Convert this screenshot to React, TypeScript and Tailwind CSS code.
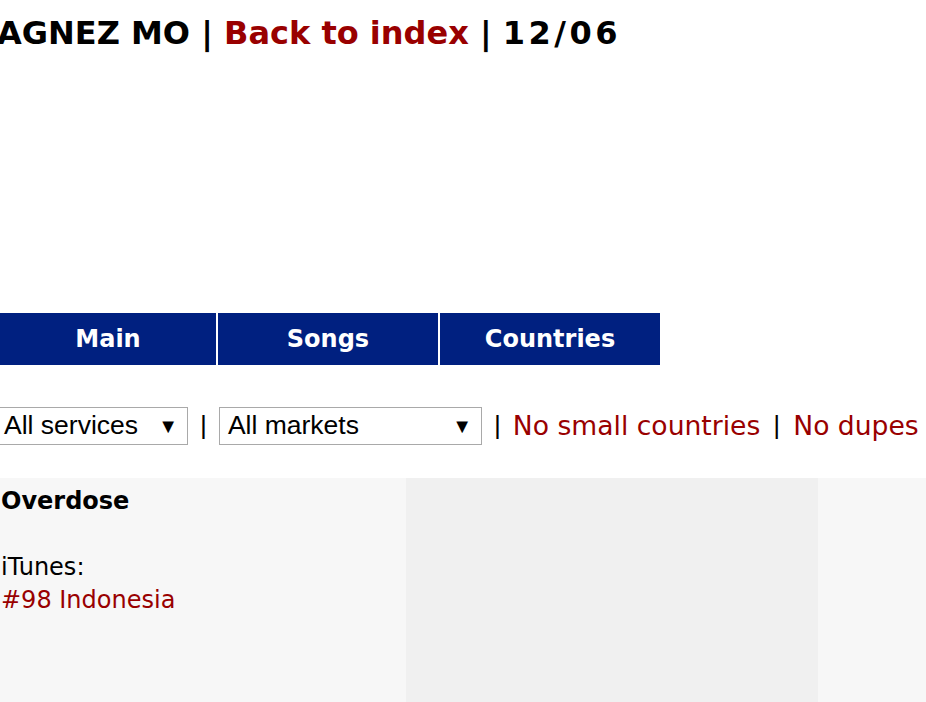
const verdana = "font-['Verdana','DejaVu_Sans',sans-serif]";

function Select({ label, width }: { label: string; width: string }) {
  return (
    <div
      className={`${width} h-[38px] flex items-center justify-between border border-[#a9a9a9] bg-white pl-[8px] pr-[9px] font-['Liberation_Sans',Arial,sans-serif] text-[26.5px] text-black`}
    >
      <span>{label}</span>
      <span className="text-[20px]">▼</span>
    </div>
  );
}

export default function App() {
  return (
    <div className={`${verdana} bg-white w-[926px] h-[702px] overflow-hidden`}>
      <h1 className="-ml-[3px] pt-[14px] text-[32px] font-bold leading-[38px] text-black whitespace-nowrap">
        AGNEZ MO | <span className="text-[#990000]">Back to index</span> |{" "}
        <span className="tracking-[3.5px]">12/06</span>
      </h1>

      <nav className="mt-[261px] flex gap-[2px]">
        {["Main", "Songs", "Countries"].map((t, i) => (
          <div
            key={t}
            className={`${i === 0 ? "w-[216px]" : "w-[220px]"} h-[52px] flex items-center justify-center bg-[#002080] text-white font-bold text-[24px]`}
          >
            {t}
          </div>
        ))}
      </nav>

      <div className="mt-[41px] flex items-center -ml-[5px] whitespace-nowrap text-[26.6px]">
        <Select label="All services" width="w-[193px]" />
        <span className="mx-[12px] font-['Liberation_Sans',Arial,sans-serif]">|</span>
        <Select label="All markets" width="w-[263px]" />
        <span className="ml-[12px] mr-[12px] font-['Liberation_Sans',Arial,sans-serif]">|</span>
        <span className="text-[#990000]">No small countries</span>
        <span className="mx-[13px] font-['Liberation_Sans',Arial,sans-serif]">|</span>
        <span className="text-[#990000]">No dupes</span>
      </div>

      <div className="mt-[32px] grid grid-cols-[406px_412px_1fr] h-[260px] text-[24px] leading-[33px]">
        <div className="bg-[#f7f7f7] pt-[7px] pl-[1px]">
          <div className="font-bold">Overdose</div>
          <div className="h-[33px]" />
          <div>iTunes:</div>
          <div className="text-[#990000]">#98 Indonesia</div>
        </div>
        <div className="bg-[#f0f0f0]" />
        <div className="bg-[#f7f7f7]" />
      </div>
    </div>
  );
}
